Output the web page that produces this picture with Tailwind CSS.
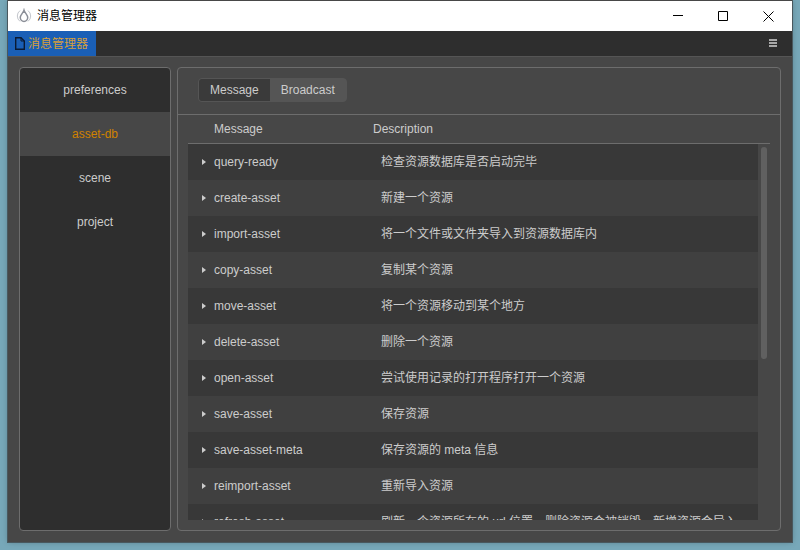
<!DOCTYPE html>
<html lang="zh-CN">
<head>
<meta charset="utf-8">
<title>消息管理器</title>
<script src="https://cdn.jsdelivr.net/npm/@tailwindcss/browser@4"></script>
</head>
<body class="h-screen overflow-hidden bg-[#77a8b9] px-2 pb-2 font-['Liberation_Sans','Noto_Sans_CJK_SC',sans-serif] text-xs text-[#cccccc]">
<div class="flex h-full flex-col bg-[#474747] shadow-[0_0_6px_#0004] outline outline-[#49585e]">
  <header class="mt-px flex h-[30px] shrink-0 items-center bg-white pl-2 text-black">
    <svg class="size-4" viewBox="0 0 16 16" fill="none" aria-hidden="true">
      <path d="M4 2.6A6.8 6.8 0 0 0 4 13.4M12 2.6A6.8 6.8 0 0 1 12 13.4" stroke="#c3c6cc"/>
      <path d="M8 2.2C7.2 5 4.3 6.6 4.3 9.6a3.7 3.9 0 0 0 7.4 0C11.7 6.6 8.8 5 8 2.2Z" stroke="#8b8f98" stroke-width="1.5"/>
    </svg>
    <h1 class="ml-[5px]">消息管理器</h1>
    <div class="ml-auto flex h-full">
      <button class="grid w-[45px] place-items-center" aria-label="最小化"><svg class="size-[11px]" viewBox="0 0 11 11" stroke="#000"><path d="M1 4.5H11"/></svg></button>
      <button class="grid w-[45px] place-items-center" aria-label="最大化"><svg class="size-[11px]" viewBox="0 0 11 11" stroke="#000" fill="none"><path d="M1.5 .5H10.5V9.5H1.5Z"/></svg></button>
      <button class="grid w-[47px] place-items-center" aria-label="关闭"><svg class="size-[11px]" viewBox="0 0 11 11" stroke="#000"><path d="M.5 .5 10.5 10.5M10.5 .5 .5 10.5"/></svg></button>
    </div>
  </header>
  <div class="flex h-[26px] shrink-0 items-stretch border-b border-[#555] bg-[#2e2e2e]">
    <button class="flex items-center gap-[3px] bg-[#1a5fb6] pr-2 pl-[7px] text-[#d79f3a]">
      <svg class="h-[13px] w-[10px]" viewBox="0 0 10 13" fill="none" stroke="#0a1a33" aria-hidden="true"><path d="M.7 .7H6L9.3 4V12.3H.7Z" stroke-width="1.4"/><path d="M6 .7V4H9.3"/></svg>
      消息管理器
    </button>
    <button class="ml-auto grid w-[38px] place-items-center" aria-label="菜单"><svg class="h-[9px] w-2" viewBox="0 0 8 9" fill="#a8a8a8" shape-rendering="crispEdges"><path d="M0 0H8V2H0ZM0 3H8V5H0ZM0 6H8V8H0Z"/></svg></button>
  </div>
  <main class="flex min-h-0 flex-1 gap-[6px] px-[11px] pt-[10px] pb-[11px]">
    <nav class="flex w-[152px] shrink-0 flex-col overflow-hidden rounded border border-[#6d6d6d] bg-[#2e2e2e]">
      <a href="#preferences" class="grid h-11 place-items-center">preferences</a>
      <a href="#asset-db" aria-current="page" class="grid h-11 place-items-center bg-[#474747] text-[#d08200]">asset-db</a>
      <a href="#scene" class="grid h-11 place-items-center">scene</a>
      <a href="#project" class="grid h-11 place-items-center">project</a>
    </nav>
    <section class="flex min-w-0 flex-1 flex-col rounded border border-[#6d6d6d]">
      <div class="flex h-[47px] shrink-0 items-start border-b border-[#6d6d6d] px-5 pt-[10px]">
        <div class="flex h-6 overflow-hidden rounded border border-[#555] bg-[#555]">
          <button class="bg-[#3a3a3a] px-[11px]" aria-pressed="true">Message</button>
          <button class="px-[11px]" aria-pressed="false">Broadcast</button>
        </div>
      </div>
      <div class="relative mx-[10px] mb-[10px] min-h-0 flex-1 overflow-hidden">
        <table class="w-full table-fixed text-left whitespace-nowrap">
          <colgroup><col class="w-[185px]"><col><col class="w-3"></colgroup>
          <thead>
            <tr class="h-[29px] shadow-[inset_0_-1px_#6d6d6d]"><th class="pb-px pl-[26px] font-normal">Message</th><th class="pb-px font-normal">Description</th><td></td></tr>
          </thead>
          <tbody id="rows"></tbody>
        </table>
        <div class="absolute top-8 right-[3px] h-[212px] w-[6px] rounded-full bg-[#606060]" role="scrollbar" aria-label="消息列表" aria-controls="rows" aria-valuenow="0"></div>
      </div>
    </section>
  </main>
</div>
<script>
const messages = [
  ['query-ready', '检查资源数据库是否启动完毕'],
  ['create-asset', '新建一个资源'],
  ['import-asset', '将一个文件或文件夹导入到资源数据库内'],
  ['copy-asset', '复制某个资源'],
  ['move-asset', '将一个资源移动到某个地方'],
  ['delete-asset', '删除一个资源'],
  ['open-asset', '尝试使用记录的打开程序打开一个资源'],
  ['save-asset', '保存资源'],
  ['save-asset-meta', '保存资源的 meta 信息'],
  ['reimport-asset', '重新导入资源'],
  ['refresh-asset', '刷新一个资源所在的 url 位置，删除资源会被销毁，新增资源会导入'],
];
document.getElementById('rows').innerHTML = messages.map(([name, text], i) => {
  const bg = i % 2 ? 'bg-[#404040]' : 'bg-[#383838]';
  return `<tr class="h-9"><td class="${bg} pl-[14px]"><button class="flex items-center gap-2"><svg class="h-[6px] w-1" viewBox="0 0 4 6" fill="#cccccc" aria-hidden="true"><path d="M0 0 4 3 0 6Z"/></svg>${name}</button></td><td class="${bg} pl-2">${text}</td><td></td></tr>`;
}).join('');
</script>
</body>
</html>
